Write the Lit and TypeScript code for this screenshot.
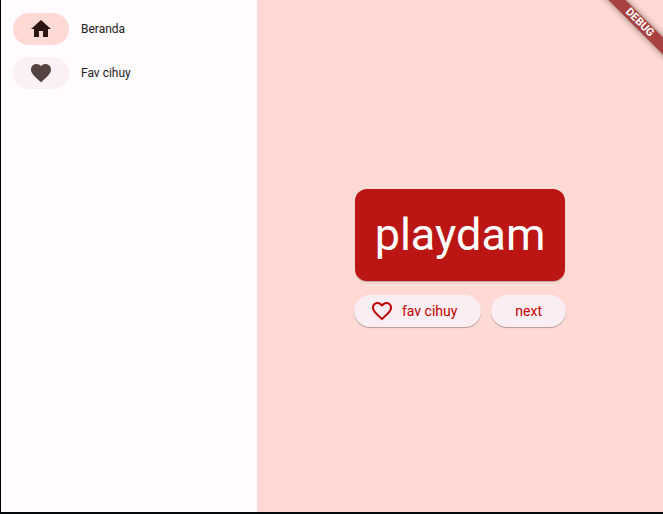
import { LitElement, html, css } from "lit";
import { customElement, state } from "lit/decorators.js";

const HOME = "M10 20v-6h4v6h5v-8h3L12 3 2 12h3v8z";
const HEART =
  "M12 21.35l-1.45-1.32C5.4 15.36 2 12.28 2 8.5 2 5.42 4.42 3 7.5 3c1.74 0 3.41.81 4.5 2.09C13.09 3.81 14.76 3 16.5 3 19.58 3 22 5.42 22 8.5c0 3.78-3.4 6.86-8.55 11.54L12 21.35z";
const HEART_OUTLINE =
  "M16.5 3c-1.74 0-3.41.81-4.5 2.09C10.91 3.81 9.24 3 7.5 3 4.42 3 2 5.42 2 8.5c0 3.78 3.4 6.86 8.55 11.54L12 21.35l1.45-1.32C18.6 15.36 22 12.28 22 8.5 22 5.42 19.58 3 16.5 3zm-4.4 15.55l-.1.1-.1-.1C7.14 14.24 4 11.39 4 8.5 4 6.5 5.5 5 7.5 5c1.54 0 3.04.99 3.57 2.36h1.87C13.46 5.99 14.96 5 16.5 5c2 0 3.5 1.5 3.5 3.5 0 2.89-3.14 5.74-7.9 10.05z";

const icon = (path: string) => html`
  <svg class="icon" viewBox="0 0 24 24" aria-hidden="true"><path d=${path} /></svg>
`;

@customElement("app-root")
export class AppRoot extends LitElement {
  @state() private selected = 0;

  private items = [
    { label: "Beranda", path: HOME },
    { label: "Fav cihuy", path: HEART },
  ];

  static styles = css`
    :host {
      display: flex;
      box-sizing: border-box;
      min-height: 100vh;
      position: relative;
      overflow: hidden;
      border-left: 1px solid #000;
      border-bottom: 2px solid #060a0e;
      background: #ffdad4;
      font-family: Roboto, "Liberation Sans", sans-serif;
    }
    button {
      border: 0;
      margin: 0;
      font-family: inherit;
      cursor: pointer;
    }
    .icon {
      width: 24px;
      height: 24px;
      fill: currentColor;
      flex: none;
    }
    .rail {
      flex: 0 0 256px;
      box-sizing: border-box;
      padding: 13px 12px;
      display: flex;
      flex-direction: column;
      gap: 12px;
      background: #fffbff;
    }
    .item {
      display: flex;
      align-items: center;
      gap: 12px;
      padding: 0;
      background: none;
      color: #201a19;
      font-size: 12px;
      line-height: 16px;
      text-align: left;
    }
    .pill {
      width: 56px;
      height: 32px;
      border-radius: 16px;
      display: flex;
      align-items: center;
      justify-content: center;
      background: #fbf1f5;
      color: #534341;
    }
    .item.active .pill {
      background: #ffdad4;
      color: #2c1512;
    }
    .main {
      flex: 1;
      display: flex;
      flex-direction: column;
      align-items: center;
      justify-content: center;
      gap: 14px;
      padding-top: 3px;
    }
    .card {
      box-sizing: border-box;
      padding: 20px;
      border-radius: 12px;
      background: #bb1614;
      color: #fff;
      font-size: 45px;
      line-height: 52px;
      box-shadow: 0 1px 1px rgba(0, 0, 0, 0.25);
    }
    .actions {
      display: flex;
      gap: 10px;
    }
    .action {
      display: flex;
      align-items: center;
      gap: 8px;
      height: 32px;
      padding: 0 24px;
      border-radius: 16px;
      background: #fbeef3;
      color: #c00100;
      font-size: 14px;
      line-height: 20px;
      box-shadow: 0 1px 1px rgba(0, 0, 0, 0.3);
    }
    .action.with-icon {
      padding-left: 16px;
    }
    .banner {
      position: absolute;
      top: 18px;
      right: -38px;
      box-sizing: border-box;
      width: 120px;
      height: 12px;
      padding-right: 4px;
      transform: rotate(45deg);
      background: #a94140;
      box-shadow: 0 0 6px rgba(0, 0, 0, 0.5);
      color: #fff;
      font-size: 11px;
      font-weight: 700;
      line-height: 12px;
      text-align: center;
    }
  `;

  render() {
    return html`
      <nav class="rail">
        ${this.items.map(
          (item, i) => html`
            <button
              class="item ${i === this.selected ? "active" : ""}"
              @click=${() => (this.selected = i)}
            >
              <span class="pill">${icon(item.path)}</span>
              <span>${item.label}</span>
            </button>
          `
        )}
      </nav>
      <main class="main">
        <div class="card">playdam</div>
        <div class="actions">
          <button class="action with-icon">${icon(HEART_OUTLINE)}<span>fav cihuy</span></button>
          <button class="action">next</button>
        </div>
      </main>
      <div class="banner">DEBUG</div>
    `;
  }
}
